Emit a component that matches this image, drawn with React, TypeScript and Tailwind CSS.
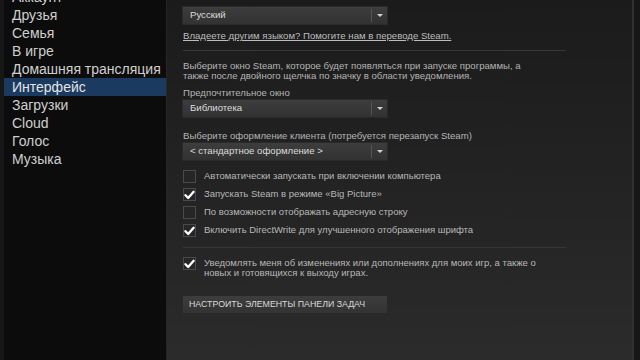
import React from 'react';

const menu = ['Аккаунт', 'Друзья', 'Семья', 'В игре', 'Домашняя трансляция', 'Интерфейс', 'Загрузки', 'Cloud', 'Голос', 'Музыка'];

function Select({ value }: { value: string }) {
    return (
        <div className="flex h-[17px] w-[204px] items-center bg-gradient-to-b from-[#3d3d3d] to-[#323232] shadow-[0_0_0_1px_#2a2a2a]">
            <div className="flex-1 pl-[7px] text-[9.6px] text-[#dcdcdc]">{value}</div>
            <div className="h-[13px] w-px bg-[#555]" />
            <div className="flex w-[15px] justify-center">
                <div className="h-0 w-0 border-x-[3.5px] border-t-[3.5px] border-x-transparent border-t-[#d0d0d0]" />
            </div>
        </div>
    );
}

function Check({ on, children }: { on: boolean; children: React.ReactNode }) {
    return (
        <div className="flex items-start gap-[8px]">
            <div className="mt-[-1px] flex h-[13px] w-[13px] shrink-0 items-center justify-center border border-[#4a4a4a] bg-[#262626]">
                {on && (
                    <svg width="11" height="10" viewBox="0 0 11 10">
                        <path d="M1.5 5.2 L4.2 8 L9.6 1.8" fill="none" stroke="#ffffff" strokeWidth="2.3" strokeLinecap="round" strokeLinejoin="round" />
                    </svg>
                )}
            </div>
            <div className="text-[9.5px] leading-[10px] text-[#b8b8b8]">{children}</div>
        </div>
    );
}

export default function App() {
    return (
        <div className="flex h-[360px] w-[640px] overflow-hidden bg-[#0d0d0d]" style={{ fontFamily: '"Liberation Sans", Arial, sans-serif' }}>
            {/* sidebar */}
            <div className="flex w-[166px] shrink-0">
                <div className="w-[4px] bg-[#171717]" />
                <div className="flex-1 bg-[#0c0c0c]">
                    <div className="mt-[-12px] flex flex-col">
                        {menu.map(m => (
                            <div
                                key={m}
                                className={`flex h-[18px] items-center pl-[8px] text-[14px] text-[#cfcfcf] ${m === 'Интерфейс' ? 'bg-[#1b3a5f] text-[#e4e4e4]' : ''}`}
                            >
                                {m}
                            </div>
                        ))}
                    </div>
                </div>
            </div>
            <div className="w-px bg-[#262626]" />

            {/* settings panel */}
            <div className="flex-1 bg-gradient-to-b from-[#1b1b1b] to-[#2b2b2b] pl-[16px] pt-[7px]">
                <Select value="Русский" />
                <div className="mt-[6px] text-[9.6px] leading-[11px] text-[#bcbcbc] underline">
                    Владеете другим языком? Помогите нам в переводе Steam.
                </div>
                <div className="mt-[9px] h-px w-[383px] bg-[#363636]" />
                <div className="mt-[10px] text-[9.6px] leading-[10px] text-[#b4b4b4]">
                    Выберите окно Steam, которое будет появляться при запуске программы, а
                    <br />
                    также после двойного щелчка по значку в области уведомления.
                </div>
                <div className="mt-[7px] text-[9.6px] leading-[10px] text-[#b4b4b4]">Предпочтительное окно</div>
                <div className="mt-[2px]">
                    <Select value="Библиотека" />
                </div>
                <div className="mt-[14px] text-[9.6px] leading-[10px] text-[#b4b4b4]">Выберите оформление клиента (потребуется перезапуск Steam)</div>
                <div className="mt-[2px]">
                    <Select value="< стандартное оформление >" />
                </div>
                <div className="mt-[11px] flex flex-col gap-[6px]">
                    <Check on={false}>Автоматически запускать при включении компьютера</Check>
                    <Check on>Запускать Steam в режиме «Big Picture»</Check>
                    <Check on={false}>По возможности отображать адресную строку</Check>
                    <Check on>Включить DirectWrite для улучшенного отображения шрифта</Check>
                </div>
                <div className="mt-[10px] h-px w-[383px] bg-[#363636]" />
                <div className="mt-[10px]">
                    <Check on>
                        Уведомлять меня об изменениях или дополнениях для моих игр, а также о
                        <br />
                        новых и готовящихся к выходу играх.
                    </Check>
                </div>
                <div className="mt-[18px] flex h-[17px] w-[204px] items-center bg-gradient-to-b from-[#3d3d3d] to-[#333333] pl-[6px] text-[8.8px] text-[#d8d8d8]">
                    НАСТРОИТЬ ЭЛЕМЕНТЫ ПАНЕЛИ ЗАДАЧ
                </div>
            </div>

            {/* right edge */}
            <div className="w-[2px] bg-[#303030]" />
            <div className="w-[6px] bg-[#171717]" />
        </div>
    );
}
